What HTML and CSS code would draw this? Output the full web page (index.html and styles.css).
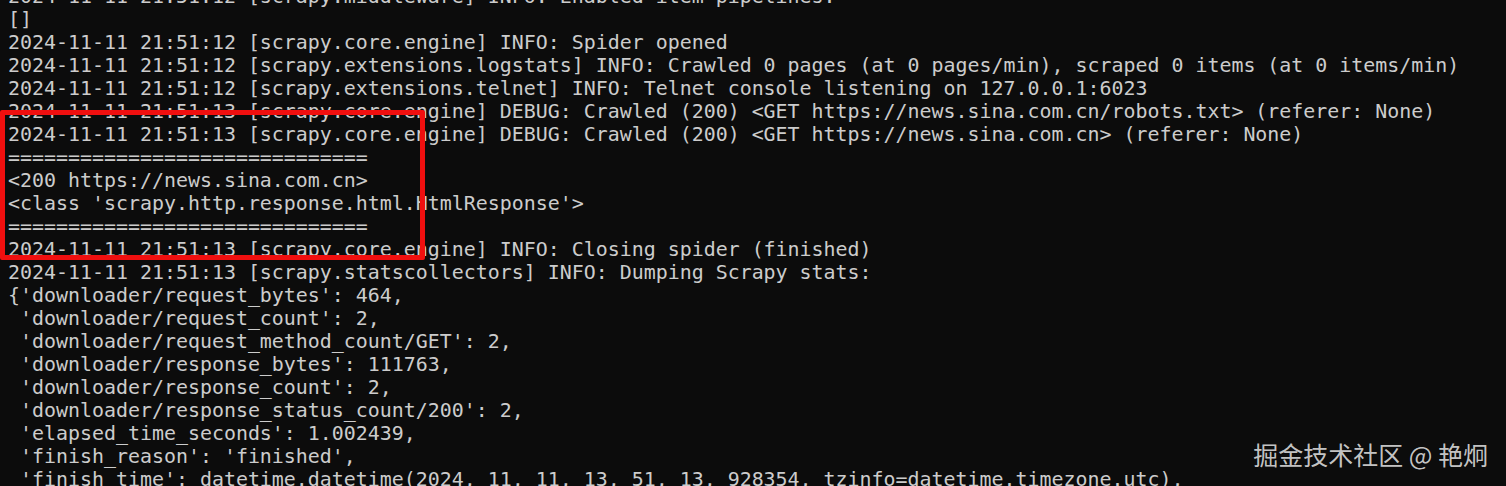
FILE: index.html
```html
<!DOCTYPE html>
<html lang="en">
<head>
<meta charset="utf-8">
<title>Scrapy log</title>
<link rel="stylesheet" href="styles.css">
</head>
<body>
<div class="terminal">
<pre class="log">2024-11-11 21:51:12 [scrapy.middleware] INFO: Enabled item pipelines:
[]
2024-11-11 21:51:12 [scrapy.core.engine] INFO: Spider opened
2024-11-11 21:51:12 [scrapy.extensions.logstats] INFO: Crawled 0 pages (at 0 pages/min), scraped 0 items (at 0 items/min)
2024-11-11 21:51:12 [scrapy.extensions.telnet] INFO: Telnet console listening on 127.0.0.1:6023
2024-11-11 21:51:13 [scrapy.core.engine] DEBUG: Crawled (200) &lt;GET https://news.sina.com.cn/robots.txt&gt; (referer: None)
2024-11-11 21:51:13 [scrapy.core.engine] DEBUG: Crawled (200) &lt;GET https://news.sina.com.cn&gt; (referer: None)
==============================
&lt;200 https://news.sina.com.cn&gt;
&lt;class 'scrapy.http.response.html.HtmlResponse'&gt;
==============================
2024-11-11 21:51:13 [scrapy.core.engine] INFO: Closing spider (finished)
2024-11-11 21:51:13 [scrapy.statscollectors] INFO: Dumping Scrapy stats:
{'downloader/request_bytes': 464,
 'downloader/request_count': 2,
 'downloader/request_method_count/GET': 2,
 'downloader/response_bytes': 111763,
 'downloader/response_count': 2,
 'downloader/response_status_count/200': 2,
 'elapsed_time_seconds': 1.002439,
 'finish_reason': 'finished',
 'finish_time': datetime.datetime(2024, 11, 11, 13, 51, 13, 928354, tzinfo=datetime.timezone.utc),</pre>
<div class="highlight"></div>
<div class="watermark">掘金技术社区 @ 艳炯</div>
</div>
</body>
</html>
```

FILE: styles.css
```css
html, body {
  margin: 0;
  padding: 0;
  background: #0c0c0c;
  overflow: hidden;
}
.terminal {
  position: relative;
  width: 1506px;
  height: 486px;
  overflow: hidden;
  background: #0c0c0c;
}
.log {
  margin: -15px 0 0 0;
  padding: 0 0 0 8px;
  font-family: "DejaVu Sans Mono", "Liberation Mono", monospace;
  font-size: 19.93px;
  line-height: 23px;
  color: #cccccc;
  white-space: pre;
}
.highlight {
  position: absolute;
  left: 0;
  top: 110px;
  width: 415px;
  height: 140px;
  border: 5px solid #f00f0f;
  border-radius: 2px;
}
.watermark {
  position: absolute;
  right: 18px;
  top: 437px;
  font-family: "Noto Sans CJK SC", "Noto Sans", sans-serif;
  font-size: 25px;
  line-height: 34px;
  color: rgba(220, 220, 220, 0.9);
}
```
